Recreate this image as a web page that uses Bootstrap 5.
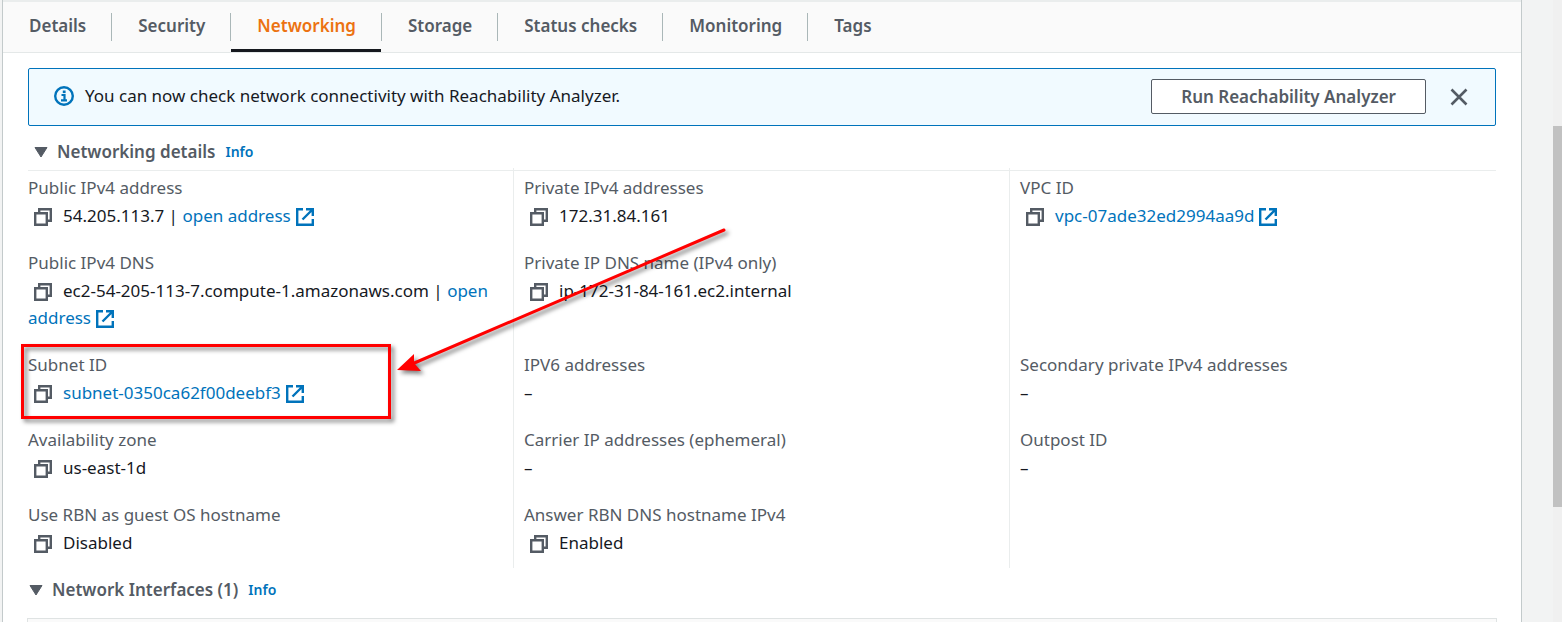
<!DOCTYPE html>
<html lang="en">
<head>
<meta charset="utf-8">
<meta name="viewport" content="width=device-width, initial-scale=1">
<title>Instance networking</title>
<link href="https://cdn.jsdelivr.net/npm/bootstrap@5.3.0/dist/css/bootstrap.min.css" rel="stylesheet">
<style>
  body {
    font-family: "Noto Sans", "Open Sans", sans-serif;
    font-size: 17px;
    line-height: 28px;
    color: #16191f;
    background: #f2f3f3;
  }
  a { color: #0073bb; text-decoration: none; }
  a:hover { text-decoration: underline; }

  .console-panel {
    background: #fff;
    border: solid #c3cacb;
    border-width: 0 1px;
    margin: 0 40px 0 2px;
  }
  .console-body { padding: 15px 25px 0; }

  /* Tabs */
  .console-tabs {
    height: 53px;
    background: #fafafa;
    border-top: 2px solid #eaeded;
    border-bottom: 1px solid #e4e8e8;
  }
  .console-tabs .nav-item { display: flex; }
  .console-tabs .nav-item:not(:last-child)::after {
    content: "";
    width: 1px;
    height: 28px;
    margin-top: 11px;
    background: #aab7b8;
  }
  .console-tabs .nav-link {
    padding: 10px 25px 0 26px;
    line-height: 28px;
    height: 50px;
    color: #545b64;
    font-weight: 600;
    border-bottom: 3px solid transparent;
  }
  .console-tabs .nav-link.active { color: #ec7211; border-bottom-color: #16191f; }

  /* Flash bar */
  .console-flash {
    border: 1px solid #0073bb;
    border-radius: 2px;
    background: #f1faff;
    height: 58px;
    padding: 0 27px 2px 25px;
  }
  .flash-text { margin-left: 11px; }
  .btn-analyzer {
    background: #fff;
    border: 1px solid #545b64;
    border-radius: 2px;
    color: #545b64;
    font-size: 17px;
    font-weight: 600;
    line-height: 25px;
    padding: 4px 29px;
  }
  .icon-btn { background: none; border: 0; padding: 0; color: #545b64; line-height: 1; }
  .icon-btn svg, .ext { display: inline-block; vertical-align: -4px; }
  .ext { margin-left: 5px; }

  /* Collapsible headings */
  .section-head { font-size: 17px; font-weight: 600; color: #545b64; line-height: 28px; gap: 10px; }
  .head-details { padding: 12px 0 4px 6px; border-bottom: 1px solid #eaeded; margin: 0; }
  .head-ifaces { padding-left: 1px; margin: 0 0 14px; }
  .section-toggle { font: inherit; color: inherit; gap: 9px; }
  .info-link { font-size: 14px; font-weight: 600; }

  /* Detail grid */
  .detail-grid { --bs-gutter-x: 20px; margin: -3px -10px 8px; }
  .detail-grid > .col-4 { padding: 0 10px 20px; position: relative; }
  .detail-grid > .col-4:nth-child(-n+3) { padding-top: 6px; }
  .detail-grid > .col-4:nth-last-child(-n+3) { padding-bottom: 12px; }
  .detail-grid > .col-4:not(:nth-child(3n+1)) { box-shadow: -1px 0 #eaeded; }
  .detail-grid dt { font-weight: 400; color: #545b64; line-height: 28px; }
  .detail-grid dd { line-height: 27px; margin: 0; }
  .copy { margin: 0 11px 0 6px; }

  .mark-box {
    position: absolute;
    top: -7px;
    left: 3px;
    width: 370px;
    height: 75px;
    border: 3px solid #f00;
    pointer-events: none;
    filter: drop-shadow(3px 3px 2px rgba(0, 0, 0, .5));
  }
  .mark-arrow {
    position: absolute;
    top: -143px;
    left: 378px;
    pointer-events: none;
    overflow: visible;
    filter: drop-shadow(3px 3px 2px rgba(0, 0, 0, .5));
  }

  .iface-card { border: 1px solid #dfe3e3; border-bottom: 0; background: #fafafa; margin: 0 -1px; height: 4px; }

  .scroll-track { position: fixed; top: 0; right: 0; bottom: 0; width: 9px; background: #f0f0f0; }
  .scroll-thumb { position: absolute; left: 0; right: 0; top: 126px; height: 381px; background: #c1c1c1; }
</style>
</head>
<body>
<svg class="d-none" aria-hidden="true">
  <symbol id="i-copy" viewBox="0 0 18 18">
    <path d="M1.2 5.2h11.6v11.6H1.2z M5.2 5V1.2h11.6v11.6H13" fill="none" stroke="currentColor" stroke-width="2.4"/>
  </symbol>
  <symbol id="i-ext" viewBox="0 0 18 18">
    <path d="M7 1.2H1.2v15.6h15.6V11 M10 1.2h6.8V8 M16.5 1.5L6.5 11.5" fill="none" stroke="currentColor" stroke-width="2.4"/>
  </symbol>
</svg>

<main class="console-panel">
  <ul class="nav console-tabs flex-nowrap">
    <li class="nav-item"><a class="nav-link" href="#">Details</a></li>
    <li class="nav-item"><a class="nav-link" href="#">Security</a></li>
    <li class="nav-item"><a class="nav-link active" aria-current="page" href="#">Networking</a></li>
    <li class="nav-item"><a class="nav-link" href="#">Storage</a></li>
    <li class="nav-item"><a class="nav-link" href="#">Status checks</a></li>
    <li class="nav-item"><a class="nav-link" href="#">Monitoring</a></li>
    <li class="nav-item"><a class="nav-link" href="#">Tags</a></li>
  </ul>

  <div class="console-body">
    <div class="console-flash d-flex align-items-center" role="status">
      <svg width="20" height="20" viewBox="0 0 20 20" fill="none" stroke="#0073bb" aria-hidden="true">
        <circle cx="10" cy="10" r="8.8" stroke-width="2.4"/>
        <path d="M7.5 9h3v5M7 14.3h6" stroke-width="2.2"/><path d="M8.8 5.8h2.8" stroke-width="2.6"/>
      </svg>
      <span class="flash-text flex-grow-1">You can now check network connectivity with Reachability Analyzer.</span>
      <button type="button" class="btn-analyzer">Run Reachability Analyzer</button>
      <button type="button" class="icon-btn ms-4" aria-label="Dismiss">
        <svg width="18" height="18" viewBox="0 0 18 18" fill="none" stroke="currentColor" stroke-width="2.6"><path d="M1.5 1.5l15 15M16.5 1.5l-15 15"/></svg>
      </button>
    </div>

    <h2 class="section-head head-details d-flex align-items-center">
      <button type="button" class="icon-btn section-toggle d-flex align-items-center" aria-expanded="true">
        <svg width="14" height="12" viewBox="0 0 14 12" aria-hidden="true"><path d="M1 1.5h12L7 11z" fill="currentColor" stroke="currentColor" stroke-linejoin="round"/></svg>
        Networking details
      </button>
      <a class="info-link" href="#">Info</a>
    </h2>

    <dl class="row detail-grid">
      <div class="col-4">
        <dt>Public IPv4 address</dt>
        <dd><button class="icon-btn copy" aria-label="Copy"><svg width="18" height="18"><use href="#i-copy"/></svg></button>54.205.113.7 | <a href="#">open address<svg class="ext" width="18" height="18"><use href="#i-ext"/></svg></a></dd>
      </div>
      <div class="col-4">
        <dt>Private IPv4 addresses</dt>
        <dd><button class="icon-btn copy" aria-label="Copy"><svg width="18" height="18"><use href="#i-copy"/></svg></button>172.31.84.161</dd>
      </div>
      <div class="col-4">
        <dt>VPC ID</dt>
        <dd><button class="icon-btn copy" aria-label="Copy"><svg width="18" height="18"><use href="#i-copy"/></svg></button><a href="#">vpc-07ade32ed2994aa9d<svg class="ext" width="18" height="18"><use href="#i-ext"/></svg></a></dd>
      </div>

      <div class="col-4">
        <dt>Public IPv4 DNS</dt>
        <dd><button class="icon-btn copy" aria-label="Copy"><svg width="18" height="18"><use href="#i-copy"/></svg></button>ec2-54-205-113-7.compute-1.amazonaws.com | <a href="#"><span>open</span> <span>address</span><svg class="ext" width="18" height="18"><use href="#i-ext"/></svg></a></dd>
      </div>
      <div class="col-4">
        <dt>Private IP DNS name (IPv4 only)</dt>
        <dd><button class="icon-btn copy" aria-label="Copy"><svg width="18" height="18"><use href="#i-copy"/></svg></button>ip-172-31-84-161.ec2.internal</dd>
      </div>
      <div class="col-4"></div>

      <div class="col-4 z-1">
        <dt>Subnet ID</dt>
        <dd><button class="icon-btn copy" aria-label="Copy"><svg width="18" height="18"><use href="#i-copy"/></svg></button><a href="#">subnet-0350ca62f00deebf3<svg class="ext" width="18" height="18"><use href="#i-ext"/></svg></a></dd>
        <div class="mark-box"></div>
        <svg class="mark-arrow" width="332" height="170" viewBox="0 0 332 170" aria-hidden="true">
          <path d="M328 22L16 156" stroke="#f00" stroke-width="3" stroke-linecap="round"/>
          <path d="M1 162L18 146L18 155L25 163z" fill="#f00"/>
        </svg>
      </div>
      <div class="col-4"><dt>IPV6 addresses</dt><dd>–</dd></div>
      <div class="col-4"><dt>Secondary private IPv4 addresses</dt><dd>–</dd></div>

      <div class="col-4">
        <dt>Availability zone</dt>
        <dd><button class="icon-btn copy" aria-label="Copy"><svg width="18" height="18"><use href="#i-copy"/></svg></button>us-east-1d</dd>
      </div>
      <div class="col-4"><dt>Carrier IP addresses (ephemeral)</dt><dd>–</dd></div>
      <div class="col-4"><dt>Outpost ID</dt><dd>–</dd></div>

      <div class="col-4">
        <dt>Use RBN as guest OS hostname</dt>
        <dd><button class="icon-btn copy" aria-label="Copy"><svg width="18" height="18"><use href="#i-copy"/></svg></button>Disabled</dd>
      </div>
      <div class="col-4">
        <dt>Answer RBN DNS hostname IPv4</dt>
        <dd><button class="icon-btn copy" aria-label="Copy"><svg width="18" height="18"><use href="#i-copy"/></svg></button>Enabled</dd>
      </div>
      <div class="col-4"></div>
    </dl>

    <h2 class="section-head head-ifaces d-flex align-items-center">
      <button type="button" class="icon-btn section-toggle d-flex align-items-center" aria-expanded="true">
        <svg width="14" height="12" viewBox="0 0 14 12" aria-hidden="true"><path d="M1 1.5h12L7 11z" fill="currentColor" stroke="currentColor" stroke-linejoin="round"/></svg>
        Network Interfaces (1)
      </button>
      <a class="info-link" href="#">Info</a>
    </h2>
    <div class="iface-card"></div>
  </div>
</main>
<div class="scroll-track" aria-hidden="true"><div class="scroll-thumb"></div></div>
<script src="https://cdn.jsdelivr.net/npm/bootstrap@5.3.0/dist/js/bootstrap.bundle.min.js"></script>
</body>
</html>
